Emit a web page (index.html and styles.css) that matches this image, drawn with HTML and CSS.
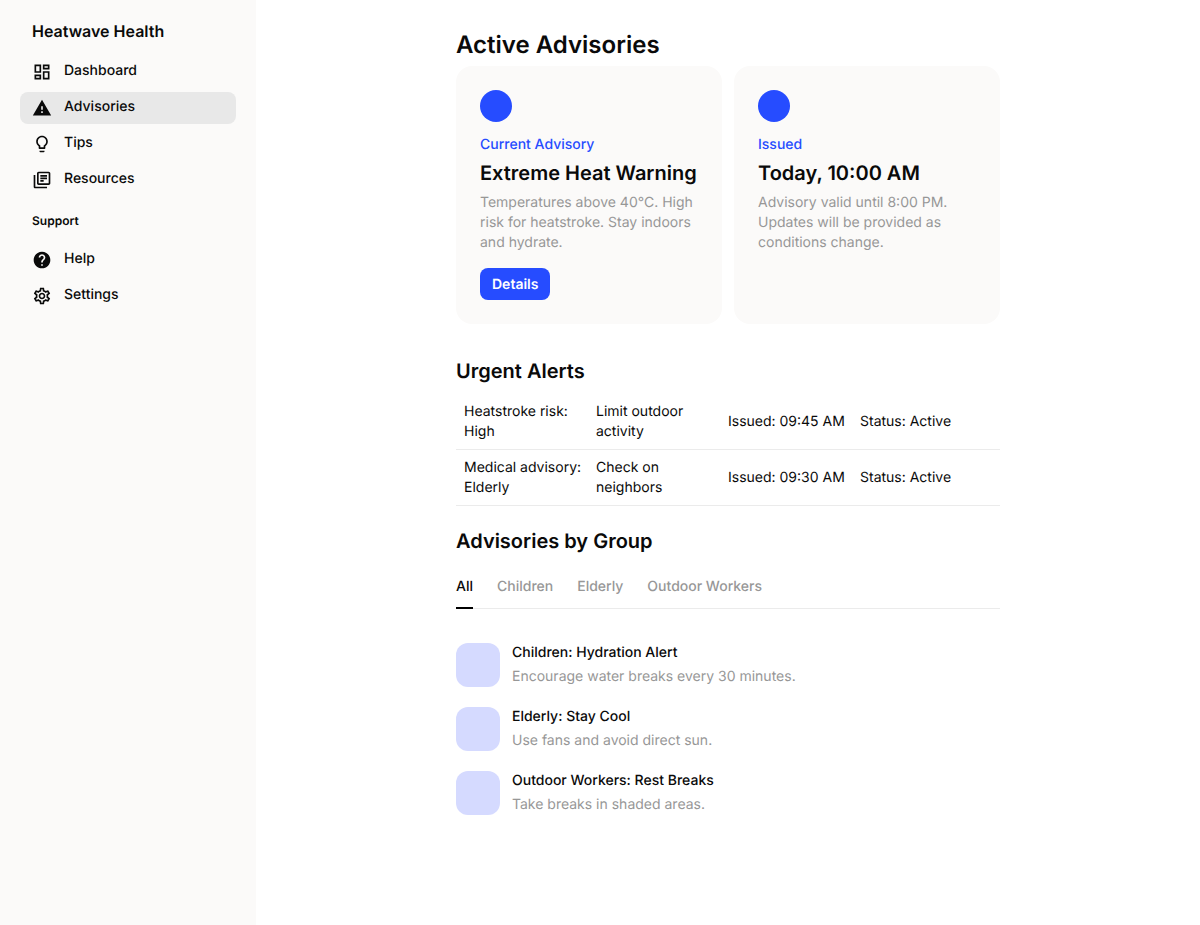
FILE: index.html
```html
<!DOCTYPE html>
<html lang="en">
<head>
<meta charset="utf-8">
<meta name="viewport" content="width=device-width, initial-scale=1">
<title>Heatwave Health</title>
<link rel="stylesheet" href="styles.css">
</head>
<body>
<div class="app">
  <aside class="sidebar">
    <p class="brand">Heatwave Health</p>
    <nav class="nav" aria-label="Main">
      <a class="nav-item" href="#dashboard">
        <svg class="icon" viewBox="0 0 24 24" aria-hidden="true"><path d="M19 5v2h-4V5h4M9 5v6H5V5h4m10 8v6h-4v-6h4M9 17v2H5v-2h4M21 3h-8v6h8V3zM11 3H3v10h8V3zm10 8h-8v10h8V11zm-10 4H3v6h8v-6z"/></svg>
        <span class="nav-label">Dashboard</span>
      </a>
      <a class="nav-item nav-item-active" href="#advisories" aria-current="page">
        <svg class="icon" viewBox="0 0 24 24" aria-hidden="true"><path d="M1 21h22L12 2 1 21zm12-3h-2v-2h2v2zm0-4h-2v-4h2v4z"/></svg>
        <span class="nav-label">Advisories</span>
      </a>
      <a class="nav-item" href="#tips">
        <svg class="icon" viewBox="0 0 24 24" aria-hidden="true"><path d="M9 21c0 .55.45 1 1 1h4c.55 0 1-.45 1-1v-1H9v1zm3-19C8.14 2 5 5.14 5 9c0 2.38 1.19 4.47 3 5.74V17c0 .55.45 1 1 1h6c.55 0 1-.45 1-1v-2.26c1.81-1.27 3-3.36 3-5.74 0-3.86-3.14-7-7-7zm2.85 11.1l-.85.6V16h-4v-2.3l-.85-.6C7.8 12.16 7 10.63 7 9c0-2.76 2.24-5 5-5s5 2.24 5 5c0 1.63-.8 3.16-2.15 4.1z"/></svg>
        <span class="nav-label">Tips</span>
      </a>
      <a class="nav-item" href="#resources">
        <svg class="icon" viewBox="0 0 24 24" aria-hidden="true"><path d="M4 6H2v14c0 1.1.9 2 2 2h14v-2H4V6zm16-4H8c-1.1 0-2 .9-2 2v12c0 1.1.9 2 2 2h12c1.1 0 2-.9 2-2V4c0-1.1-.9-2-2-2zm0 14H8V4h12v12zM10 9h8v2h-8zm0 3h4v2h-4zm0-6h8v2h-8z"/></svg>
        <span class="nav-label">Resources</span>
      </a>
    </nav>
    <p class="nav-heading">Support</p>
    <nav class="nav" aria-label="Support">
      <a class="nav-item" href="#help">
        <svg class="icon" viewBox="0 0 24 24" aria-hidden="true"><path d="M12 2C6.48 2 2 6.48 2 12s4.48 10 10 10 10-4.48 10-10S17.52 2 12 2zm1 17h-2v-2h2v2zm2.07-7.75l-.9.92C13.45 12.9 13 13.5 13 15h-2v-.5c0-1.1.45-2.1 1.17-2.83l1.24-1.26c.37-.36.59-.86.59-1.41 0-1.1-.9-2-2-2s-2 .9-2 2H8c0-2.21 1.79-4 4-4s4 1.79 4 4c0 .88-.36 1.68-.93 2.25z"/></svg>
        <span class="nav-label">Help</span>
      </a>
      <a class="nav-item" href="#settings">
        <svg class="icon" viewBox="0 0 24 24" aria-hidden="true"><path d="M19.43 12.98c.04-.32.07-.64.07-.98 0-.34-.03-.66-.07-.98l2.11-1.65c.19-.15.24-.42.12-.64l-2-3.46c-.09-.16-.26-.25-.44-.25-.06 0-.12.01-.17.03l-2.49 1c-.52-.4-1.08-.73-1.69-.98l-.38-2.65C14.46 2.18 14.25 2 14 2h-4c-.25 0-.46.18-.49.42l-.38 2.65c-.61.25-1.17.59-1.69.98l-2.49-1c-.06-.02-.12-.03-.18-.03-.17 0-.34.09-.43.25l-2 3.46c-.13.22-.07.49.12.64l2.11 1.65c-.04.32-.07.65-.07.98 0 .33.03.66.07.98l-2.11 1.65c-.19.15-.24.42-.12.64l2 3.46c.09.16.26.25.44.25.06 0 .12-.01.17-.03l2.49-1c.52.4 1.08.73 1.69.98l.38 2.65c.03.24.24.42.49.42h4c.25 0 .46-.18.49-.42l.38-2.65c.61-.25 1.17-.59 1.69-.98l2.49 1c.06.02.12.03.18.03.17 0 .34-.09.43-.25l2-3.46c.12-.22.07-.49-.12-.64l-2.11-1.65zm-1.98-1.71c.04.31.05.52.05.73 0 .21-.02.43-.05.73l-.14 1.13.89.7 1.08.84-.7 1.21-1.27-.51-1.04-.42-.9.68c-.43.32-.84.56-1.25.73l-1.06.43-.16 1.13-.2 1.35h-1.4l-.19-1.35-.16-1.13-1.06-.43c-.43-.18-.83-.41-1.23-.71l-.91-.7-1.06.43-1.27.51-.7-1.21 1.08-.84.89-.7-.14-1.13c-.03-.31-.05-.54-.05-.74s.02-.43.05-.73l.14-1.13-.89-.7-1.08-.84.7-1.21 1.27.51 1.04.42.9-.68c.43-.32.84-.56 1.25-.73l1.06-.43.16-1.13.2-1.35h1.39l.19 1.35.16 1.13 1.06.43c.43.18.83.41 1.23.71l.91.7 1.06-.43 1.27-.51.7 1.21-1.07.85-.89.7.14 1.13zM12 8c-2.21 0-4 1.79-4 4s1.79 4 4 4 4-1.79 4-4-1.79-4-4-4zm0 6c-1.1 0-2-.9-2-2s.9-2 2-2 2 .9 2 2-.9 2-2 2z"/></svg>
        <span class="nav-label">Settings</span>
      </a>
    </nav>
  </aside>

  <main class="main">
    <div class="content">
      <h1 class="page-title">Active Advisories</h1>
      <div class="cards">
        <section class="card">
          <span class="card-dot"></span>
          <p class="card-label">Current Advisory</p>
          <h2 class="card-title">Extreme Heat Warning</h2>
          <p class="card-text">Temperatures above 40°C. High risk for heatstroke. Stay indoors and hydrate.</p>
          <button class="button" type="button">Details</button>
        </section>
        <section class="card">
          <span class="card-dot"></span>
          <p class="card-label">Issued</p>
          <h2 class="card-title">Today, 10:00 AM</h2>
          <p class="card-text">Advisory valid until 8:00 PM. Updates will be provided as conditions change.</p>
        </section>
      </div>

      <h2 class="section-title alerts-title" id="alerts">Urgent Alerts</h2>
      <table class="alerts" aria-labelledby="alerts">
        <colgroup>
          <col class="alerts-col"><col class="alerts-col"><col class="alerts-col"><col>
        </colgroup>
        <tbody>
          <tr>
            <td>Heatstroke risk: High</td>
            <td>Limit outdoor activity</td>
            <td>Issued: 09:45 AM</td>
            <td>Status: Active</td>
          </tr>
          <tr>
            <td>Medical advisory: Elderly</td>
            <td>Check on neighbors</td>
            <td>Issued: 09:30 AM</td>
            <td>Status: Active</td>
          </tr>
        </tbody>
      </table>

      <h2 class="section-title groups-title" id="groups">Advisories by Group</h2>
      <div class="tabs" role="tablist" aria-labelledby="groups">
        <button class="tab tab-active" type="button" role="tab" aria-selected="true">All</button>
        <button class="tab" type="button" role="tab" aria-selected="false">Children</button>
        <button class="tab" type="button" role="tab" aria-selected="false">Elderly</button>
        <button class="tab" type="button" role="tab" aria-selected="false">Outdoor Workers</button>
      </div>
      <ul class="groups">
        <li class="group">
          <span class="group-thumb"></span>
          <div class="group-body">
            <h3 class="group-title">Children: Hydration Alert</h3>
            <p class="group-text">Encourage water breaks every 30 minutes.</p>
          </div>
        </li>
        <li class="group">
          <span class="group-thumb"></span>
          <div class="group-body">
            <h3 class="group-title">Elderly: Stay Cool</h3>
            <p class="group-text">Use fans and avoid direct sun.</p>
          </div>
        </li>
        <li class="group">
          <span class="group-thumb"></span>
          <div class="group-body">
            <h3 class="group-title">Outdoor Workers: Rest Breaks</h3>
            <p class="group-text">Take breaks in shaded areas.</p>
          </div>
        </li>
      </ul>
    </div>
  </main>
</div>
</body>
</html>
```

FILE: styles.css
```css
:root {
  --ink: #0a0a0a;
  --muted: #979797;
  --blue: #264cff;
  --blue-soft: #d5daff;
  --surface: #fbfaf9;
  --selected: #e8e8e8;
  --line: #ebebeb;
}

*,
*::before,
*::after {
  box-sizing: border-box;
}

body,
h1,
h2,
h3,
p,
ul {
  margin: 0;
  padding: 0;
}

body {
  background: #fff;
  color: var(--ink);
  font-family: Inter, "Liberation Sans", sans-serif;
  font-size: 14px;
  line-height: 20px;
  text-rendering: geometricPrecision;
}

button {
  border: 0;
  background: none;
  font: inherit;
  text-rendering: inherit;
  cursor: pointer;
}

.app {
  display: flex;
  min-height: 100vh;
}

/* Sidebar */
.sidebar {
  flex: 0 0 256px;
  padding: 20px;
  background: var(--surface);
}

.brand {
  padding: 0 12px;
  margin-bottom: 14px;
  font-size: 16px;
  font-weight: 600;
  line-height: 22px;
}

.nav {
  display: flex;
  flex-direction: column;
  gap: 4px;
}

.nav-item {
  display: flex;
  align-items: center;
  gap: 12px;
  height: 32px;
  padding: 0 12px;
  border-radius: 8px;
  color: inherit;
  font-weight: 500;
  text-decoration: none;
}

.nav-item-active {
  background: var(--selected);
}

.icon {
  flex: none;
  width: 20px;
  height: 20px;
  fill: currentColor;
}

.nav-label {
  padding-bottom: 2px;
}

.nav-heading {
  padding: 15px 12px 13px;
  font-size: 12px;
  font-weight: 600;
}

/* Main column */
.main {
  flex: 1;
  min-width: 0;
  padding: 28px 24px;
}

.content {
  max-width: 544px;
  margin: 0 auto;
}

.page-title {
  margin-bottom: 4px;
  font-size: 24px;
  font-weight: 600;
  line-height: 34px;
}

.section-title {
  font-size: 20px;
  font-weight: 600;
  line-height: 30px;
}

/* Advisory cards */
.cards {
  display: grid;
  grid-template-columns: 1fr 1fr;
  gap: 12px;
}

.card {
  display: flex;
  flex-direction: column;
  align-items: flex-start;
  padding: 24px;
  border-radius: 16px;
  background: var(--surface);
}

.card-dot {
  width: 32px;
  height: 32px;
  margin-bottom: 12px;
  border-radius: 50%;
  background: var(--blue);
}

.card-label {
  margin-bottom: 2px;
  color: var(--blue);
  font-weight: 500;
  line-height: 22px;
}

.card-title {
  margin-bottom: 5px;
  font-size: 20px;
  font-weight: 600;
  line-height: 30px;
  white-space: nowrap;
}

.card-text {
  color: var(--muted);
}

.button {
  height: 32px;
  margin-top: 15px;
  padding: 2px 12px 0;
  border-radius: 8px;
  background: var(--blue);
  color: #fff;
  font-weight: 600;
}

/* Alerts table */
.alerts-title {
  margin: 32px 0 8px;
}

.alerts {
  width: 100%;
  border-collapse: separate;
  border-spacing: 0;
  table-layout: fixed;
}

.alerts-col {
  width: 132px;
}

.alerts td {
  padding: 8px 4px 7px 8px;
  border-bottom: 1px solid var(--line);
  vertical-align: middle;
}

/* Group tabs and list */
.groups-title {
  margin: 20px 0;
}

.tabs {
  display: flex;
  gap: 24px;
  border-bottom: 1px solid var(--line);
}

.tab {
  margin-bottom: -1px;
  padding: 0 0 9px;
  border-bottom: 2px solid transparent;
  color: var(--muted);
  font-weight: 500;
  line-height: 22px;
}

.tab-active {
  border-bottom-color: #000;
  color: var(--ink);
}

.groups {
  display: flex;
  flex-direction: column;
  gap: 20px;
  margin-top: 34px;
  list-style: none;
}

.group {
  display: flex;
  gap: 12px;
}

.group-thumb {
  flex: none;
  width: 44px;
  height: 44px;
  border-radius: 12px;
  background: var(--blue-soft);
}

.group-body {
  display: flex;
  flex-direction: column;
  gap: 4px;
}

.group-title {
  font-size: 14px;
  font-weight: 500;
}

.group-text {
  color: var(--muted);
}
```
